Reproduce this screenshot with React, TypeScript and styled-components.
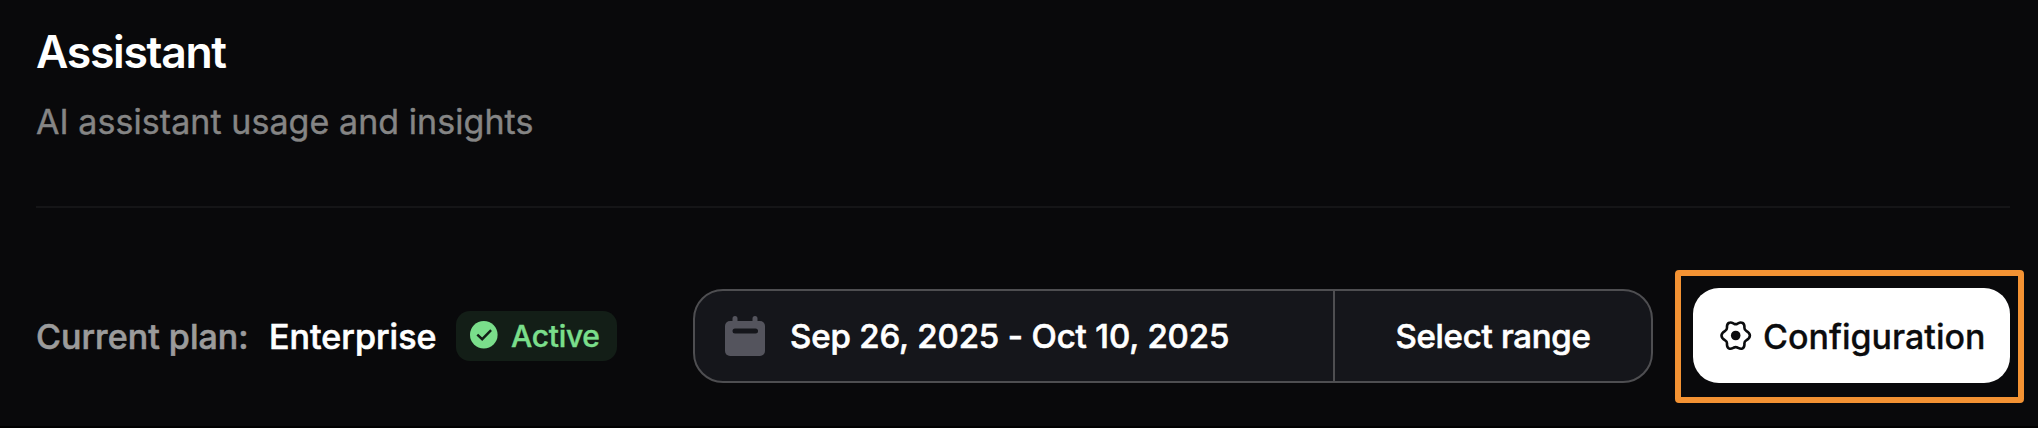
import React from 'react';
import styled, { createGlobalStyle } from 'styled-components';

const GlobalStyle = createGlobalStyle`
  *, *::before, *::after { box-sizing: border-box; }
  body {
    margin: 0;
    background: #09090b;
    font-family: Inter, "Liberation Sans", sans-serif;
    -webkit-font-smoothing: antialiased;
  }
`;

const Page = styled.main`
  display: flex;
  flex-direction: column;
  height: 428px;
  padding: 24px 28px 0 36px;
  border-bottom: 2px solid #000;
  overflow: hidden;
`;

const Header = styled.header`
  display: flex;
  flex-direction: column;
  height: 184px;
  border-bottom: 2px solid #151517;
`;

const Title = styled.h1`
  margin: 0;
  font-size: 44.5px;
  font-weight: 600;
  line-height: 56px;
  letter-spacing: -1.3px;
  color: #fff;
`;

const Subtitle = styled.p`
  margin: 18px 0 0;
  font-size: 34px;
  font-weight: 400;
  line-height: 48px;
  letter-spacing: 0.06px;
  color: #858585;
  -webkit-text-stroke: 0.4px currentColor;
`;

const Toolbar = styled.section`
  display: flex;
  align-items: center;
  height: 94px;
  margin-top: 81px;
`;

const PlanText = styled.span<{ $strong?: boolean }>`
  padding-top: 2px;
  font-size: 34px;
  font-weight: 500;
  line-height: 48px;
  letter-spacing: 0.04px;
  -webkit-text-stroke: 0.6px currentColor;
  white-space: nowrap;
  color: ${({ $strong }) => ($strong ? '#fff' : '#9b9b9b')};
  width: ${({ $strong }) => ($strong ? '187px' : '233px')};
`;

const StatusBadge = styled.span`
  display: flex;
  align-items: center;
  gap: 13px;
  width: 161px;
  height: 50px;
  padding-left: 14px;
  border-radius: 14px;
  background: #131e17;
  color: #7ade8b;
  font-size: 30px;
  font-weight: 500;
  line-height: 40px;
  letter-spacing: -0.3px;
  -webkit-text-stroke: 0.4px currentColor;
  svg { margin-top: -3px; }
`;

const RangeGroup = styled.div`
  display: flex;
  width: 960px;
  height: 94px;
  margin-left: 76px;
  border: 2px solid #4e4e51;
  border-radius: 30px;
  background: #15161b;
  overflow: hidden;
`;

const RangeButton = styled.button<{ $width: number; $centered?: boolean }>`
  display: flex;
  align-items: center;
  justify-content: ${({ $centered }) => ($centered ? 'center' : 'flex-start')};
  gap: 25px;
  width: ${({ $width }) => $width}px;
  padding: 0 ${({ $centered }) => ($centered ? 0 : 30)}px;
  border: 0;
  border-left: ${({ $centered }) => ($centered ? '2px solid #4e4e51' : '0')};
  background: transparent;
  color: #fff;
  font: 500 33px/48px Inter, sans-serif;
  letter-spacing: ${({ $centered }) => ($centered ? '-0.28px' : '-0.14px')};
  -webkit-text-stroke: 0.6px currentColor;
  white-space: nowrap;
`;

const Highlight = styled.div`
  flex: none;
  width: 349px;
  height: 133px;
  margin: 1px -14px 0 22px;
  padding: 12px;
  border: 6px solid #f39233;
  border-radius: 4px;
`;

const ConfigButton = styled.button`
  display: flex;
  align-items: center;
  gap: 11px;
  width: 317px;
  height: 95px;
  padding: 2px 0 0 27px;
  border: 0;
  border-radius: 26px;
  background: #fff;
  color: #0b0c0e;
  font: 500 34px/48px Inter, sans-serif;
  letter-spacing: 0;
  -webkit-text-stroke: 0.3px currentColor;
  svg { margin-top: -2px; }
`;

const CheckIcon = () => (
  <svg width="28" height="28" viewBox="0 0 28 28" fill="none">
    <circle cx="13.8" cy="13.8" r="13.8" fill="currentColor" />
    <path d="M7.3 13.6l4.9 4.6 8.9-9" stroke="#131e17" strokeWidth="2.4" />
  </svg>
);

const CalendarIcon = () => (
  <svg width="40" height="40" viewBox="0 0 40 40" fill="none">
    <path d="M10 2.5v7M30 2.5v7" stroke="#54545d" strokeWidth="5" strokeLinecap="round" />
    <rect y="5" width="40" height="35" rx="5" fill="#54545d" />
    <path d="M10 15h20.5" stroke="#15161b" strokeWidth="5" strokeLinecap="round" />
  </svg>
);

const GearIcon = () => (
  <svg width="32" height="30" viewBox="0 0 32 30" fill="none">
    <path
      d="M9.2 1.8C11 .8 12.6 2 14 2.7Q15.7 3.5 17.4 2.7C18.8 2 20.4.8 22.2 1.8C24.8 3 24.5 4.8 24.4 6.6Q24.3 8.8 26.2 9.8C28 10.8 29.9 12 29.9 14.6S28 18.4 26.2 19.4Q24.3 20.4 24.4 22.6C24.5 24.4 24.8 26.4 22.2 27.6C20.4 28.4 18.8 27.2 17.4 26.5Q15.7 25.7 14 26.5C12.6 27.2 11 28.4 9.2 27.6C6.6 26.4 6.9 24.4 7 22.6Q7.1 20.4 5.2 19.4C3.4 18.4 1.5 17.2 1.5 14.6S3.4 10.8 5.2 9.8Q7.1 8.8 7 6.6C6.9 4.8 6.6 3 9.2 1.8Z"
      stroke="currentColor"
      strokeWidth="2.6"
      strokeLinejoin="round"
    />
    <circle cx="15.7" cy="14.5" r="4.8" fill="currentColor" />
  </svg>
);

export default function App() {
  return (
    <>
      <GlobalStyle />
      <Page>
        <Header>
          <Title>Assistant</Title>
          <Subtitle>AI assistant usage and insights</Subtitle>
        </Header>
        <Toolbar>
          <PlanText>Current plan:</PlanText>
          <PlanText $strong>Enterprise</PlanText>
          <StatusBadge><CheckIcon />Active</StatusBadge>
          <RangeGroup>
            <RangeButton type="button" $width={638}><CalendarIcon />Sep 26, 2025 - Oct 10, 2025</RangeButton>
            <RangeButton type="button" $width={318} $centered>Select range</RangeButton>
          </RangeGroup>
          <Highlight>
            <ConfigButton type="button"><GearIcon />Configuration</ConfigButton>
          </Highlight>
        </Toolbar>
      </Page>
    </>
  );
}
